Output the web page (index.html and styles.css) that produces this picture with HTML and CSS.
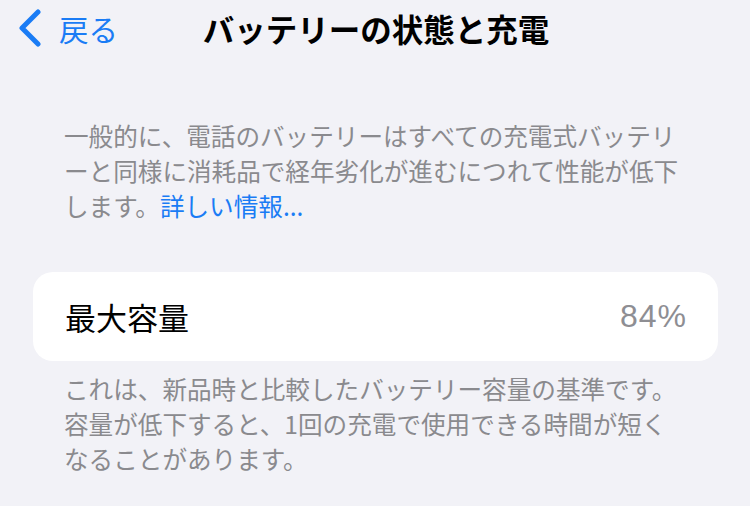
FILE: index.html
```html
<!DOCTYPE html>
<html lang="ja">
<head>
    <meta charset="UTF-8">
    <meta name="viewport" content="width=device-width, initial-scale=1.0">
    <title>バッテリーの状態と充電</title>
    <link rel="stylesheet" href="styles.css">
</head>
<body>
    <div class="navbar">
        <a class="back" href="#">
            <svg class="chevron" width="26" height="38" viewBox="0 0 26 38">
                <path d="M21 3 L5 19 L21 35" fill="none" stroke="#1a7cf5" stroke-width="5" stroke-linecap="round" stroke-linejoin="round"/>
            </svg>
            <span>戻る</span>
        </a>
        <h1>バッテリーの状態と充電</h1>
        <div></div>
    </div>

    <p class="note note-top">
        一般的に、電話のバッテリーはすべての充電式バッテリ<br>
        ーと同様に消耗品で経年劣化が進むにつれて性能が低下<br>
        します。<a href="#">詳しい情報...</a>
    </p>

    <div class="card">
        <span class="label">最大容量</span>
        <span class="value">84%</span>
    </div>

    <p class="note">
        これは、新品時と比較したバッテリー容量の基準です。<br>
        容量が低下すると、1回の充電で使用できる時間が短く<br>
        なることがあります。
    </p>
</body>
</html>
```

FILE: styles.css
```css
body {
    margin: 0;
    background-color: #f2f2f7;
    font-family: "Noto Sans CJK JP", "Noto Sans", sans-serif;
    color: #000;
    height: 506px;
    overflow: hidden;
}
.navbar {
    display: grid;
    grid-template-columns: 1fr auto 1fr;
    align-items: center;
    height: 56px;
    padding: 0 16px;
}
.back {
    display: flex;
    align-items: center;
    gap: 16px;
    color: #1a7cf5;
    text-decoration: none;
    font-size: 29.5px;
}
.chevron {
    margin-left: 1px;
}
h1 {
    margin: 0;
    font-size: 31.5px;
    font-weight: bold;
    padding-left: 2px;
}
.note {
    margin: 0;
    padding: 0 20px 0 64px;
    font-size: 24.6px;
    line-height: 35px;
    color: #8a8a8e;
}
.note-top {
    margin-top: 62px;
    margin-bottom: 49px;
}
.note a {
    color: #1a7cf5;
    text-decoration: none;
}
.card {
    display: flex;
    justify-content: space-between;
    align-items: center;
    margin: 0 32px 10px 33px;
    height: 89px;
    padding: 0 31px 0 32px;
    background-color: #fff;
    border-radius: 20px;
}
.label {
    font-size: 31px;
}
.value {
    font-family: "Liberation Sans", Arial, sans-serif;
    font-size: 32px;
    letter-spacing: 1px;
    color: #8e8e93;
}
```
